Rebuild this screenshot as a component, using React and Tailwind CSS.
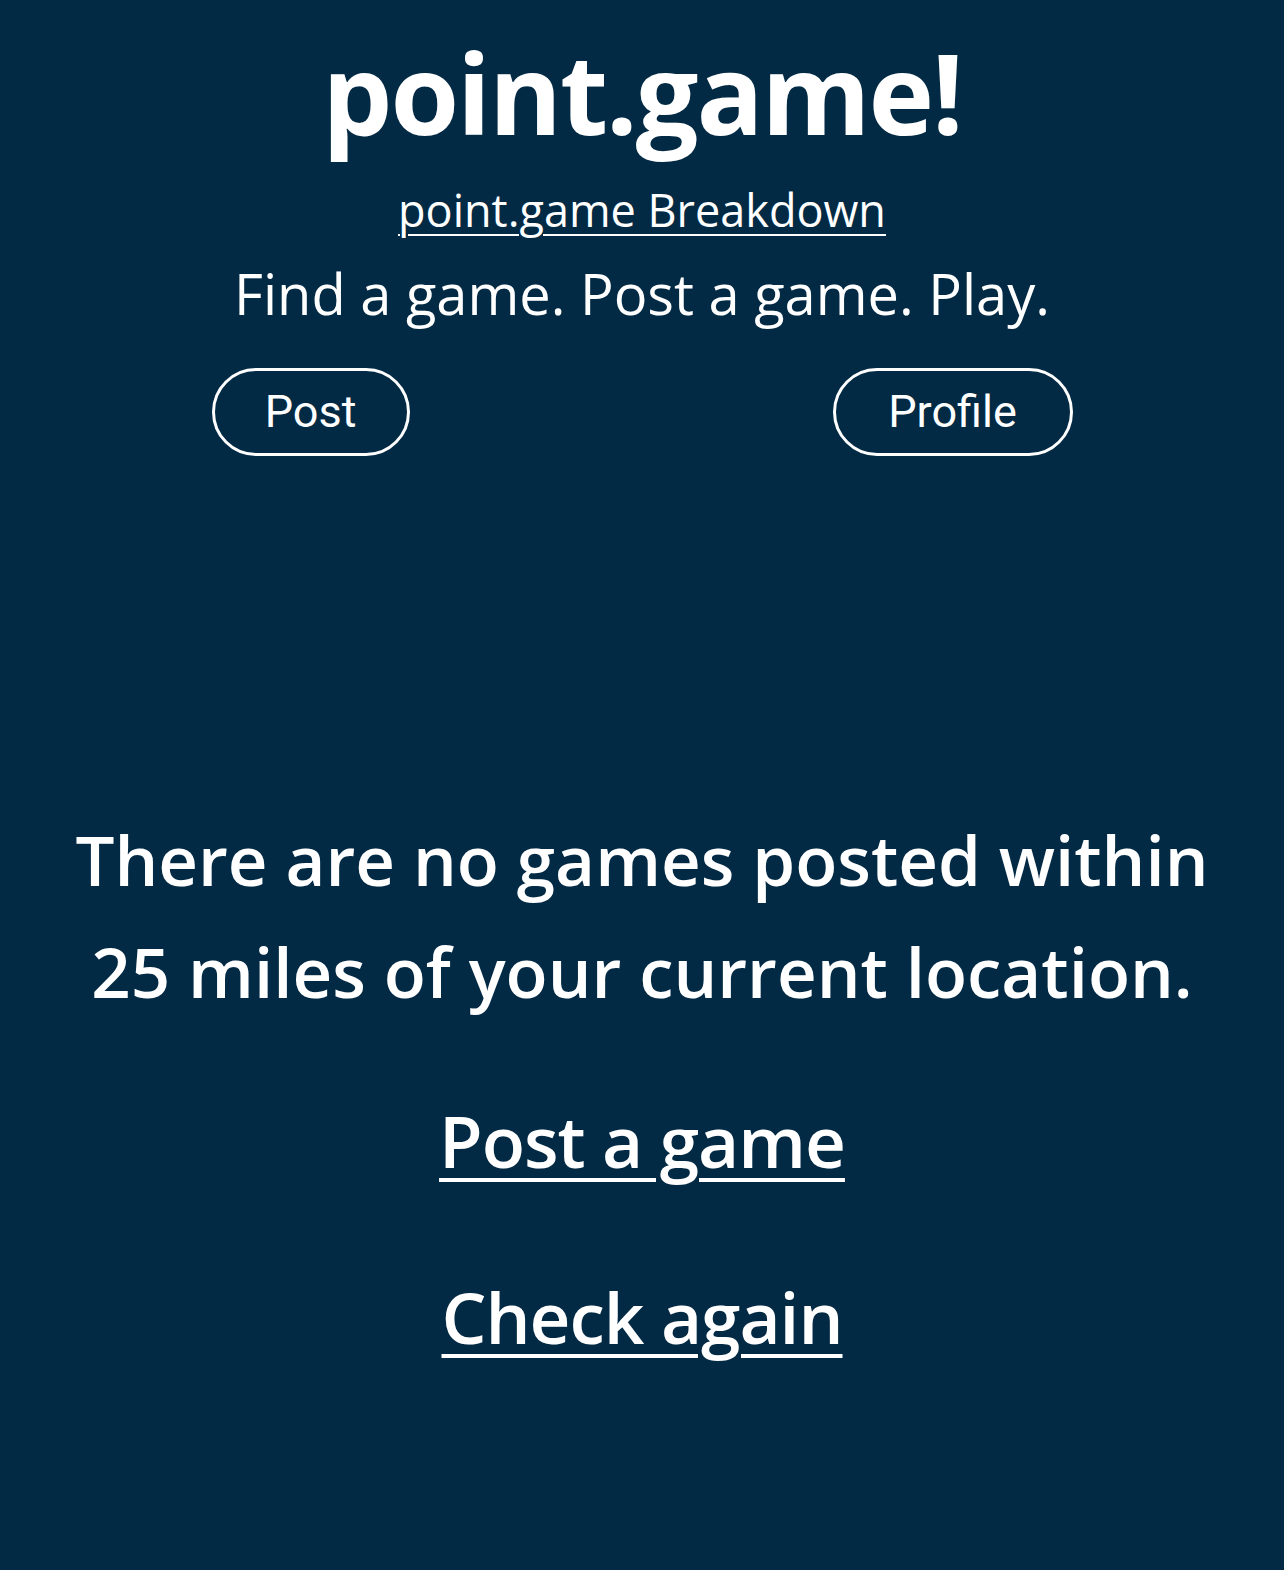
import React from 'react';

const App = () => {
  return (
    <div className="min-h-[1570px] bg-[#032a44] text-white" style={{ fontFamily: '"Open Sans", sans-serif' }}>
      <header className="flex flex-col items-center pt-[22px]">
        <h1 className="text-[111px] font-bold leading-[140px] tracking-[-2px]">point.game!</h1>
        <a href="#" className="mt-[18px] text-[45px] leading-[60px] underline underline-offset-[7px] decoration-2">
          point.game Breakdown
        </a>
        <p className="mt-[18px] text-[56px] leading-[70px]">Find a game. Post a game. Play.</p>
      </header>

      {/* nav buttons */}
      <nav className="mt-[40px] flex justify-around" style={{ fontFamily: 'Roboto, sans-serif' }}>
        <button className="h-[88px] w-[198px] rounded-full border-[3px] border-white text-[45px]">Post</button>
        <button className="h-[88px] w-[240px] rounded-full border-[3px] border-white text-[45px]">Profile</button>
      </nav>

      <main className="mt-[347px] flex flex-col items-center text-center">
        <p className="text-[69px] font-semibold leading-[112px]">
          There are no games posted within
          <br />
          25 miles of your current location.
        </p>
        <a href="#" className="mt-[64px] text-[71px] font-semibold leading-[100px] underline underline-offset-[10px] decoration-[4px] tracking-[-1px]">
          Post a game
        </a>
        <a href="#" className="mt-[76px] text-[71px] font-semibold leading-[100px] underline underline-offset-[10px] decoration-[4px] tracking-[-1px]">
          Check again
        </a>
      </main>
    </div>
  );
};

export default App;
